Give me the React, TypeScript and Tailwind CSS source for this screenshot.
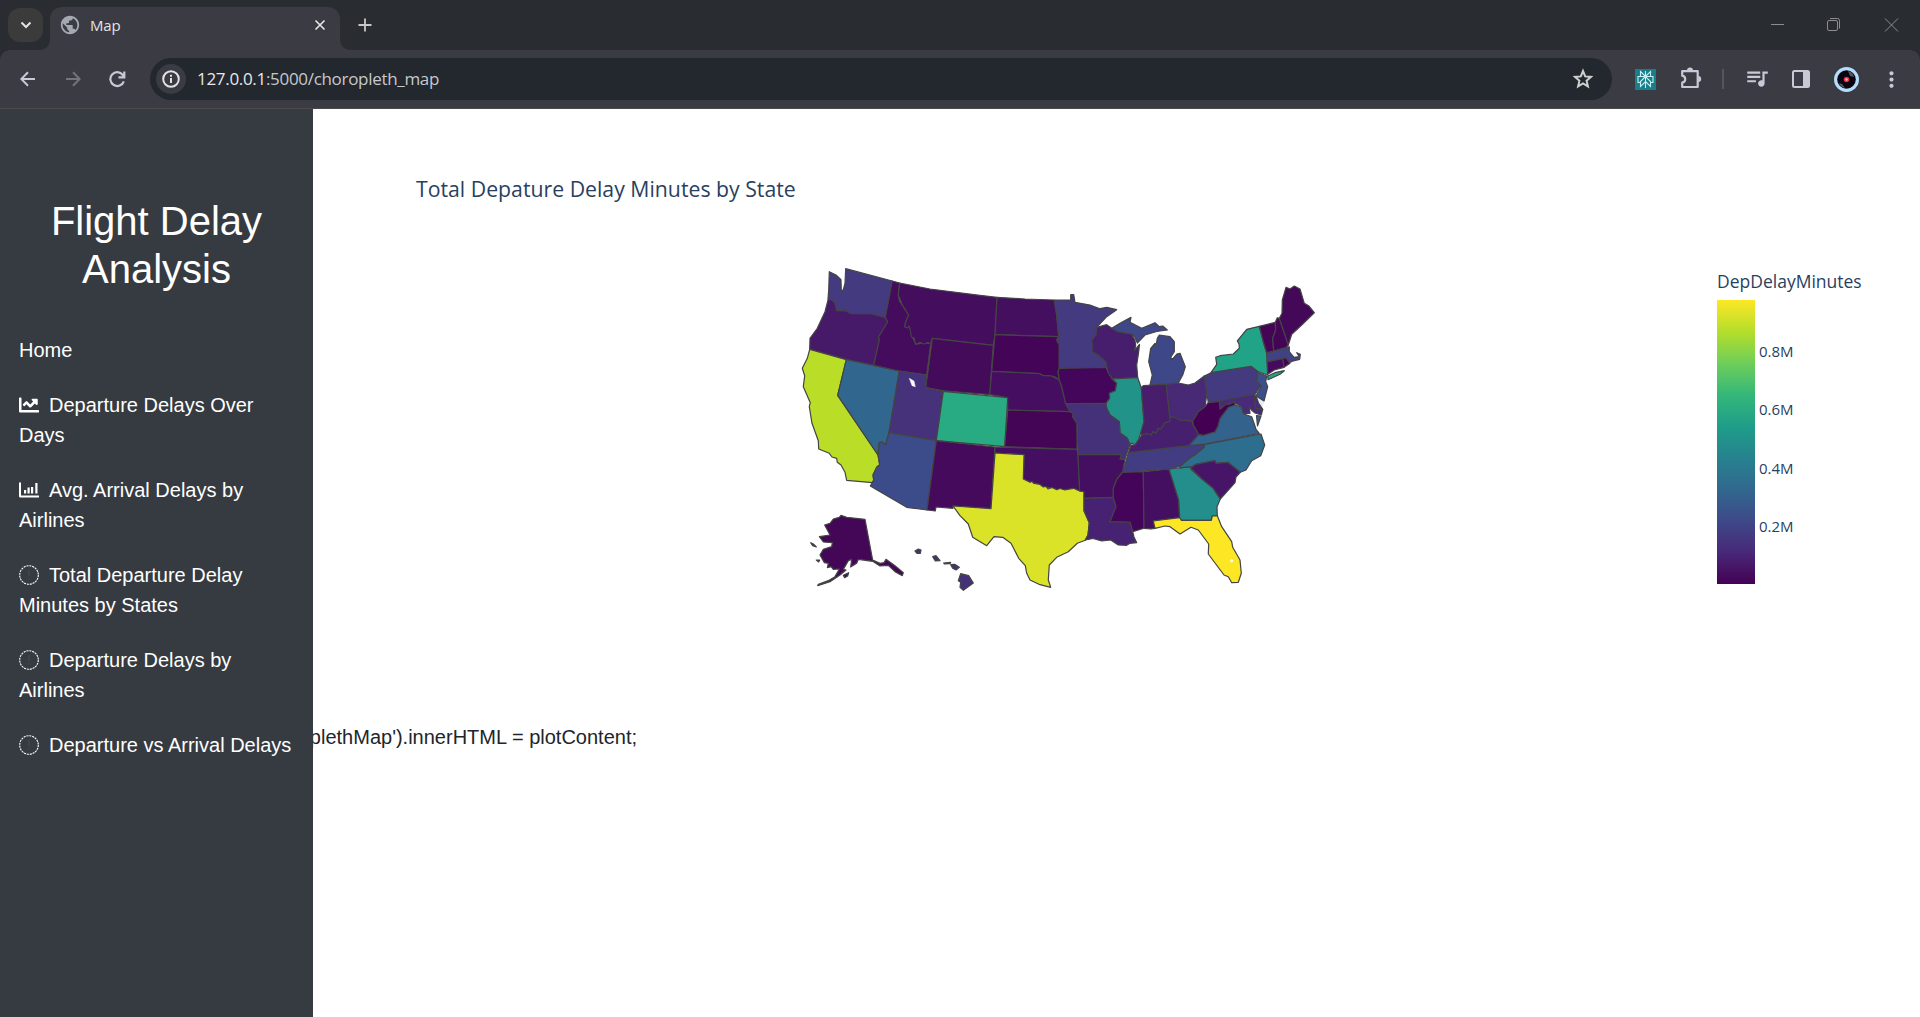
import type { ReactNode } from 'react';
import { MdQueueMusic, MdMoreVert, MdPublic } from 'react-icons/md';
import { FaChartLine } from 'react-icons/fa';

type Shape = [id: string, fill: string, d: string];

const STATES: Shape[] = [
  ['WA', '#433a80', '829.3,271.7 836,275 841,279.7 841.3,291 843.3,289.7 845,283.3 845.7,268.7 892.3,281 885.3,317.3 870,313.3 862,314 850,313.3 846,311 836.7,310.7 835,303.3 832,300 828,299 828.7,290'],
  ['OR', '#461a69', '828.3,299 825,311.7 817.3,328.3 810,338.3 809.7,349.3 846.3,359.7 873.7,365.3 879.3,340 878.7,336.7 887.7,322 885.3,317.3 870,313.3 862,314 850,313.3 846,311 836.7,310.7 835,303.3 832,300'],
  ['CA', '#bade28', '809.7,349.3 807.3,358.3 802.3,368.3 804.7,375.7 803.3,386.7 810.3,402.7 809.3,406.7 812,423.3 818.3,440.7 818.7,449 829.3,453.3 832,457 836.7,458.3 837.3,462.3 841,465 845,472.3 846.7,480.3 872.7,482.7 873.7,480 873,475 876.7,467.3 879.7,464.7 878,455 837.7,395.3 846.3,359.7'],
  ['NV', '#31668e', '846.3,359.7 837.7,395.3 878,455 879.3,442.7 881.7,442 885.7,444.7 889,432.7 899.3,371'],
  ['ID', '#450c5d', '892.3,281 899.7,283 898.3,295 899.5,301 902.7,305.7 908.7,315 906,321 904.7,326.7 909.3,326 912,336 915.7,344.3 923,343 930.7,343.7 926.7,375 899.3,371 873.7,365.3 879.3,340 878.7,336.7 887.7,322 885.3,317.3'],
  ['MT', '#450d5e', '899.7,283 930,289 980,295.3 997,297.3 995,334.7 993.3,345.3 932.3,338.3 930.7,343.7 928,342.5 924,344 920,342.5 915.7,344.3 914,338 911.5,337 909.3,326 907,328 904.7,326.7 906,321 908.7,315 902.7,305.7 898.3,295'],
  ['WY', '#450b5b', '932.3,338.3 993.3,345.3 989.7,394.7 943.3,390.8 925.7,387.7'],
  ['UT', '#45327a', '899.3,371 926.7,375 925.7,387.7 943.3,391.3 936.3,440.7 889,432.7'],
  ['CO', '#28aa82', '943.3,391.3 1007.7,397.7 1004.7,446.7 936.3,440.7'],
  ['AZ', '#3c4c8a', '889,432.7 936.3,440.7 927,510 906.7,507.3 870.3,486 873.7,480 873,475 876.7,467.3 879.7,464.7 878,455 879.3,442.7 881.7,442 885.7,444.7'],
  ['NM', '#450a5b', '936.3,440.7 995,447 991,508.7 953,506 953,508.3 936,507 935.3,511 927,510'],
  ['ND', '#450f60', '997,297.3 1025,299 1054.3,300 1056.7,315 1058.7,336.7 995,334.7'],
  ['SD', '#440559', '995,334.7 1058.7,336.7 1056.7,340 1059.3,345 1059.3,368.3 1058,372 1059.3,380 1055,377 1051.7,376 1043.3,375.7 1040,373.7 991.7,371.3'],
  ['NE', '#450e60', '991.7,371.3 1040,373.7 1043.3,375.7 1051.7,376 1059.3,380 1061.7,386.7 1065.7,403.3 1070,411.7 1007.7,410 1007.7,397.7 989.7,394.7'],
  ['KS', '#440557', '1007.7,410 1070,411.7 1073.3,413.5 1072.7,416.7 1077,423.3 1077,449.3 1004.7,446.7'],
  ['OK', '#450f61', '995,447 1077,449.3 1078,455 1079.7,491 1073.3,488.3 1065,490 1056.7,489.7 1050,488 1043.3,487 1040,484.5 1030,482.3 1023.3,479 1024,454.7 995,453'],
  ['TX', '#dae328', '995,453 1024,454.7 1023.3,479 1030,482.3 1032,481.5 1034,483.5 1040,484.5 1043.3,487 1046,486.5 1048,489 1052,487.5 1056.7,489.7 1060,488.5 1065,490 1073.3,488.3 1079.7,491 1084,491.7 1084,510.7 1089.3,522.7 1088,535 1085.3,540.3 1077.3,543.3 1068.3,551.7 1056.7,557.3 1049.3,565 1048.3,580 1050.7,587.3 1040,584.7 1030,580 1026.7,573.3 1025.3,565.7 1018.7,558.3 1011,543.3 1002.7,537.3 994,536.7 986.7,545.7 972.7,537.3 968.3,524 960,515.7 953,506 991,508.7'],
  ['MN', '#433a80', '1054.3,300 1070.7,300 1070.7,294.7 1073.7,294.7 1075,302.3 1090,305 1100,308.7 1106.7,307.3 1116.7,309.7 1106.7,316.7 1096.7,327.3 1096,335 1092,340 1092.3,351.7 1098,355 1106,362.3 1106.3,367.3 1059.3,368.3 1059.3,345 1056.7,340 1058.7,336.7 1056.7,315'],
  ['IA', '#44065a', '1059.3,368.3 1106.3,367.3 1107.7,371.7 1112.3,379 1116.7,383.3 1115.3,390.7 1109.3,393.3 1109.7,398.3 1106,403.3 1065.7,403.7 1061.7,386.7 1059.3,380 1058,372'],
  ['WI', '#471d6d', '1096.7,327.3 1106.7,324.7 1111.7,328.3 1118.3,331.7 1131.7,334 1135,340 1135.7,345.7 1134.3,350.7 1139.5,344.5 1138.7,351.7 1136.7,365 1137.7,377.7 1112.3,379 1107.7,371.7 1106,362.3 1098,355 1092.3,351.7 1092,340 1096,335'],
  ['MI-U', '#3e4787', '1111.7,328.3 1120,323.3 1131,317.3 1130,322.3 1141.7,328.3 1155,322.7 1159.3,326.7 1162.7,326 1167.3,330 1156.7,331.5 1145,335 1137.3,343 1135,337 1131.7,334 1118.3,331.7'],
  ['MI-L', '#3e4787', '1159.3,335 1170,336.7 1174.3,341.7 1174.3,351.7 1170.7,357.3 1172.3,359.3 1177,354 1180,353.3 1185.3,366.7 1182.7,375 1178.3,383 1150,385 1152.3,375 1148.7,361.7 1150.7,348.3 1155,343.3 1156,346 1157.3,338.3'],
  ['IL', '#219389', '1112.3,379 1137.7,377.7 1141.3,387.7 1144,421.7 1140.7,433.3 1138,441 1135,445 1132,443 1130,444.7 1127.3,438.3 1120,433 1119.3,421.7 1110,415 1106.7,408.3 1106,403.3 1109.7,398.3 1109.3,393.3 1115.3,390.7 1116.7,383.3'],
  ['MO', '#45307a', '1065.7,403.7 1106,403.3 1106.7,408.3 1110,415 1119.3,421.7 1120,433 1127.3,438.3 1130,444.7 1128.3,449.3 1125,459.3 1120,459.3 1121.3,454.3 1078,454.7 1077,423.3 1072.7,416.7 1073.3,413.5 1070,411.7'],
  ['AR', '#450f61', '1078,454.7 1121.3,454.3 1120,459.3 1125,459.3 1122.7,471.7 1117,479 1113.3,488.3 1113.3,497.3 1084,498.3 1084,491.7 1079.7,491'],
  ['LA', '#472272', '1084,498.3 1113.3,497.3 1116,506.7 1110,521.7 1130,522 1132.7,531.7 1134,537 1136.7,542.7 1130,543.3 1126.7,545.3 1118.3,545 1110.7,540 1101.7,541 1093,538.5 1085.3,540 1088,535 1089.3,522.7 1084,510.7'],
  ['MS', '#44045a', '1122.7,472 1143.3,471.7 1144,528.3 1132.7,531.7 1130,522 1110,521.7 1116,506.7 1113.3,497.3 1113.3,488.3 1117,479'],
  ['AL', '#450f61', '1143.3,471.7 1169,469 1178.7,500 1179.7,517.7 1153.3,521 1155,528.3 1151,529 1144,528.3'],
  ['GA', '#238e8b', '1169,469 1191.7,466.7 1190.7,469 1202,479 1213.3,488.3 1220.3,499 1217,506.7 1217.3,515.7 1212.3,516 1211.3,520.3 1181.3,520.3 1179.7,517.7 1178.7,500'],
  ['FL', '#fde725', '1153.3,521 1179.7,517.7 1181.3,520.3 1211.3,520.3 1212.3,516 1217.3,515.7 1221.7,526.7 1231.7,541.7 1232.7,547.3 1240,560 1241.3,573.3 1238.3,582.3 1231.7,582.7 1228.3,576.7 1224,575 1208.3,554 1208.7,544 1198.3,530 1191,527.3 1180,534 1170,526.7 1165,526 1155,528.3'],
  ['TN', '#423d83', '1128.3,452.7 1188.7,445.7 1204.7,444.3 1204.3,447.3 1195,455 1190,458 1180.3,466.3 1169,469 1122.7,472.3'],
  ['NC', '#2d6e8e', '1180.3,466.3 1190,458 1195,455 1204.3,447.3 1204.7,444.3 1261,434 1264.7,445 1260.7,455.7 1251.7,460.7 1246,470 1240.3,472.3 1227.7,462.3 1216,463.3 1215,460.7 1196,464.3 1191.700,466.700 1180,467.800'],
  ['SC', '#461567', '1190.7,468 1196,464.3 1215,460.7 1216,463.3 1227.7,462.3 1240.3,472.3 1236,477 1235,482.7 1220.3,499 1213.3,488.3 1202,479'],
  ['VA', '#33628c', '1188.7,445.7 1198.7,434.3 1203.3,435.3 1215,431.7 1220,418.3 1228.3,407.3 1235,405 1241.7,407.3 1244,414 1251.7,416.7 1254,423.3 1256,429.3 1259.3,433.3 1204.7,444'],
  ['KY', '#471f6f', '1128.3,452.7 1131,445 1135,445 1141.7,435 1147,433.5 1151,435 1153,431.5 1156,433 1158,428.5 1161,429 1164.3,423.3 1170,421 1169.7,416.7 1174,417 1180,420 1191.7,421 1194,426.7 1198.7,434.3 1188.7,445.7'],
  ['IN', '#471d6c', '1141.3,387.7 1143.5,385.5 1166.3,384.3 1169.7,416.7 1170,421 1164.3,423.3 1161,429 1158,428.5 1156,433 1153,431.5 1151,435 1147,433.5 1141.7,435 1140.7,433.3 1144,421.7'],
  ['OH', '#472975', '1166.3,384.3 1178.3,383 1188.3,385 1195,383 1204.3,376 1207,393.3 1205,406.7 1198,412 1196,416 1192.7,421 1180,420 1174,417 1169.7,416.7'],
  ['MD', '#472b78', '1219.3,400 1254,393.5 1256,408.3 1262.7,409.3 1261.3,415 1255,413 1251.5,410 1249.3,406.7 1250,413.3 1243.3,413.3 1241.7,406.7 1235,403.3 1230,403.5 1220,408.5'],
  ['PA', '#433a80', '1204.3,376 1211,372.7 1251,366.3 1258.3,372.3 1256.7,379 1261.3,385 1255,394.5 1208.3,402.7'],
  ['NY', '#20a386', '1211,372.7 1216.7,364.3 1215.7,357.3 1220,355.7 1233.3,354 1239.3,348.3 1239,344 1237.3,341 1246.7,329.3 1259.3,326.3 1263.3,341.7 1266.7,353.3 1267.7,375 1258.3,371.7 1251,366.3'],
  ['NY-LI', '#20a386', '1267.7,376 1275,372.7 1284.3,370.7 1280,374.3 1268,379.7'],
  ['VT', '#440556', '1259.3,326.3 1275.3,322.3 1275.7,330 1272.7,338.3 1273.7,351 1266.7,352.7 1263.3,341.7'],
  ['NH', '#440556', '1275.3,322.3 1277.3,317.7 1279.3,318.3 1287.3,341.7 1288.3,345 1286,347.7 1273.7,351 1272.7,338.3 1275.7,330'],
  ['ME', '#440858', '1279.3,318.3 1282,313.3 1282.3,300 1286,287.3 1290,289 1294.3,286 1300,289 1304.3,303.3 1309,306 1314.3,312.7 1301.7,325 1291.7,334.3 1288.3,345'],
  ['CT', '#450a5b', '1267.3,361.7 1282.7,358.3 1284,367.3 1274.3,370 1267.7,374.3'],
  ['RI', '#440356', '1282.7,358.3 1286,357.7 1290,363.3 1284,367.3'],
  ['MA', '#414183', '1267,353.3 1286,347.7 1289.3,346.7 1289.3,351.7 1294,357.3 1299.3,356.7 1296.7,352.7 1300.3,354.3 1299.7,359.3 1293.3,361 1290,362.3 1286,357.7 1267.3,361.7'],
  ['DE', '#472b78', '1254,395 1256,396 1258.5,403 1262.7,409.3 1256,408.3'],
  ['NJ', '#3b4f8a', '1257.3,372.3 1266.7,376 1265.7,381.7 1267.7,386.7 1264,401 1256,396 1261.3,386 1256.7,381.7'],
  ['WV', '#440154', '1208.3,402.7 1219.3,401.3 1220,409.3 1225,405 1230,404 1234.3,401.7 1235,405 1228.3,407.3 1224,413 1220,418.3 1218,426 1215,431.7 1203.3,435.3 1198.7,434.3 1193.3,425 1192.7,421 1196,416 1198,412 1205,406.7'],
  ['VA-E', '#33628c', '1256.5,415.5 1261,416 1257.5,426'],
];

const OFFSHORE: Shape[] = [
  ['AK', '#440757', '183,286 200,292 255,298 278,420 300,430 312,428 318,418 345,437 370,458 367,467 345,455 325,436 300,438 278,424 235,418 230,430 212,441 215,418 205,422 190,448 198,450 180,465 150,485 113,497 115,493 145,482 165,470 178,447 160,448 153,440 142,443 145,430 133,428 120,405 130,388 155,380 157,368 130,366 118,350 150,345 134,315 150,310 160,297 178,292'],
  ['AK1', '#440757', '92,368 100,372 109,381 98,377'],
  ['AK2', '#440757', '190,466 206,458 203,468 194,473'],
  ['AK3', '#440757', '109,420 119,420 116,426'],
  ['HI1', '#45307a', '405,393 415,387 423,390 421,400 411,400'],
  ['HI2', '#45307a', '458,410 468,407 480,422 466,423'],
  ['HI3', '#45307a', '491,429 512,427 510,431 493,432'],
  ['HI4', '#45307a', '512,434 524,433 538,442 528,450 518,445'],
  ['HI5', '#45307a', '542,461 566,467 580,489 550,511 540,502 542,487 535,482'],
];

function UsMap() {
  return (
    <svg className="block h-[340px] w-[530px] shrink-0" viewBox="795 260 530 340" stroke="#444444" strokeWidth="1.2" strokeLinejoin="round">
      <path d="M1255 396 L1264 402 L1262 409 L1257 404Z" fill="#e5ecf6" stroke="none" />
      {STATES.map(([id, fill, pts]) => <polygon key={id} fill={fill} points={pts} />)}
      <path d="M909.3 378.3 L914 381 L915.3 386.7 L912 385.7Z" fill="#fff" stroke="#e5ecf6" strokeWidth=".5" />
      <circle cx="1231.7" cy="560.7" r="1.5" fill="#fff" stroke="none" />
      <g transform="translate(780 420) scale(.33333)" strokeWidth="3.6">
        {OFFSHORE.map(([id, fill, pts]) => <polygon key={id} fill={fill} points={pts} />)}
      </g>
    </svg>
  );
}

function BarsIcon() {
  return (
    <svg className="mr-[10px] inline-block h-4 w-5 align-[-1px]" viewBox="0 0 20 16" fill="white">
      <path d="M0 .5h2v13h18v2H1.2Q0 15.500 0 14.300z" />
      <path d="M5 8h2.200v3.500H5zM8.500 5.500h2.200v6H8.500zM12 5h2.200v6.500H12zM16.300 1h2.200v10.500h-2.200z" />
    </svg>
  );
}

function DottedIcon() {
  return (
    <svg className="mr-[10px] inline-block h-5 w-5 align-[-3px]" viewBox="0 0 20 20" fill="none">
      <circle cx="10" cy="10" r="9.3" stroke="white" strokeWidth="1.1" strokeDasharray="2.1 .822" />
      <path d="M10 5v6M10 13v1.500" stroke="#464b53" />
    </svg>
  );
}

const NAV: { icon: ReactNode; text: string }[] = [
  { icon: null, text: 'Home' },
  { icon: <FaChartLine className="mr-[10px] inline-block h-5 w-5 align-[-3px]" />, text: 'Departure Delays Over Days' },
  { icon: <BarsIcon />, text: 'Avg. Arrival Delays by Airlines' },
  { icon: <DottedIcon />, text: 'Total Departure Delay Minutes by States' },
  { icon: <DottedIcon />, text: 'Departure Delays by Airlines' },
  { icon: <DottedIcon />, text: 'Departure vs Arrival Delays' },
];

function TabStrip() {
  return (
    <div className="flex h-[50px] bg-[#292c30]">
      <div className="mt-2 ml-2 flex h-[34px] w-[35px] items-center justify-center rounded-[12px] bg-[#3b3b3b]">
        <svg className="h-3 w-3" viewBox="0 0 12 12" fill="none" stroke="#e3e3e3" strokeWidth="2"><path d="M1.500 3.500 6 8l4.500-4.500" /></svg>
      </div>
      <svg className="mt-[38px] -ml-[5px] h-3 w-3" viewBox="0 0 12 12" fill="#3a3b43"><path d="M12 0v12H0Q12 12 12 0" /></svg>
      <div className="mt-[7px] flex h-[43px] w-[290px] items-center rounded-t-[12px] bg-[#3a3b43] pr-[14px] pb-[7px] pl-[9px]">
        <MdPublic className="h-[22px] w-[22px] text-[#a3a8b3]" />
        <span className="ml-[9px] text-[15px] tracking-[-0.2px] text-[#e3e3e3]">Map</span>
        <svg className="ml-auto h-3 w-3" viewBox="0 0 12 12" stroke="#e3e3e3" strokeWidth="1.7"><path d="M1.500 1.500l9 9M10.500 1.500l-9 9" /></svg>
      </div>
      <svg className="mt-[38px] h-3 w-3" viewBox="0 0 12 12" fill="#3a3b43"><path d="M0 0v12h12Q0 12 0 0" /></svg>
      <svg className="mt-[18px] ml-[6px] h-[14px] w-[14px]" viewBox="0 0 14 14" stroke="#c8c8c8" strokeWidth="1.8"><path d="M.5 7h13M7 .5v13" /></svg>
      <svg className="mt-[18px] mr-[21px] ml-auto h-[14px] w-[129px]" viewBox="0 0 129 14" fill="none" stroke="#8b8d90">
        <path d="M1 6.500h13" /><rect x="57.500" y="2.500" width="10" height="10" rx="1.500" /><path d="M60 .5h7.500q2 0 2 2v8" /><path d="M115 .5l13 13M128 .5l-13 13" />
      </svg>
    </div>
  );
}

function Toolbar() {
  return (
    <div className="bg-[#292c30]">
      <div className="flex h-[59px] items-center rounded-t-[10px] border-b border-[#4a4a4d] bg-[#3a3b43] pl-5 text-[#c7cad6]">
        <svg className="h-4 w-4" viewBox="0 0 16 16" fill="none" stroke="currentColor" strokeWidth="2"><path d="M15 8H1.500M8 1.300 1.300 8 8 14.700" /></svg>
        <svg className="ml-[29px] h-4 w-4 text-[#74757b]" viewBox="0 0 16 16" fill="none" stroke="currentColor" strokeWidth="2"><path d="M1 8h13.500M8 1.300 14.700 8 8 14.700" /></svg>
        <svg className="ml-[28px] h-[17px] w-[17px]" viewBox="0 0 17 17" fill="none" stroke="currentColor" strokeWidth="2.200"><path d="M14.800 10.300a6.900 6.900 0 1 1-1-6.300l1.700 1.900M15.300.5v5.800H9.500" /></svg>
        <div className="ml-6 flex h-[42px] w-[1462px] items-center rounded-full bg-[#23272e] pr-[18px] pl-[6px]">
          <div className="flex h-[30px] w-[30px] items-center justify-center rounded-full bg-[#3a3b43]">
            <svg className="h-[18px] w-[18px]" viewBox="0 0 18 18" fill="none" stroke="#e3e3e3" strokeWidth="2"><circle cx="9" cy="9" r="7.800" /><path d="M9 8v5M9 4.700v2" /></svg>
          </div>
          <span className="ml-[11px] text-[17px] tracking-[-0.31px] text-[#c7c9cc]"><span className="text-[#e8e8e8]">127.0.0.1</span>:5000/choropleth_map</span>
          <svg className="ml-auto h-[22px] w-[22px]" viewBox="0 0 22 22" fill="none" stroke="#cfcfcf" strokeWidth="2"><path d="M11 3l2.200 5.400 5.800.5-4.400 3.800 1.300 5.700-4.900-3-4.900 3 1.300-5.700L3 8.900l5.800-.5z" /></svg>
        </div>
        <svg className="ml-[23px] h-[21px] w-[21px]" viewBox="0 0 21 21" fill="none" stroke="#c8eef0" strokeWidth="1.100">
          <path d="M0 0h21v21H0z" fill="#177f8b" stroke="none" />
          <path d="M10.500 2v17M5.500 2.500l5 5 5-5v5h-10zM5.500 7.500H3v6h2.500M15.500 7.500H18v6h-2.500M10.500 7.500l-5 5v5l5-5 5 5v-5z" />
        </svg>
        <svg className="mb-[2px] ml-[24px] h-[22px] w-[22px]" viewBox="0 0 22 22" fill="none" stroke="currentColor" strokeWidth="2.200" strokeLinejoin="round">
          <path d="M2.200 4.100h15.500V20H2.200v-4.300q3-.6 3-3.500t-3-3.500z" /><path d="M7 3.500a3 3 0 0 1 6 0zM18.200 9a3 3 0 0 1 0 6z" fill="currentColor" stroke="none" />
        </svg>
        <div className="ml-[20px] h-5 w-[2px] bg-[#54565e]" />
        <MdQueueMusic className="mb-[2px] ml-[20px] h-[26px] w-[26px]" />
        <svg className="ml-[22px] h-[18px] w-[18px]" viewBox="0 0 18 18"><rect x="1" y="1" width="16" height="16" rx="1.500" fill="none" stroke="currentColor" strokeWidth="2" /><path d="M11 1h6v16h-6z" fill="currentColor" /></svg>
        <svg className="ml-[24px] h-[25px] w-[25px]" viewBox="0 0 25 25"><circle cx="12.500" cy="12.500" r="12.500" fill="#b5dcfa" /><circle cx="12.500" cy="12.500" r="9.300" fill="#080513" /><path d="M14 4q5 1 6 6l-4-1zM11 21q-5-1-6-5l3 1z" fill="#555763" /><circle cx="12.500" cy="12.500" r="2.800" fill="#e32664" /><circle cx="12.500" cy="12.500" r="1.200" fill="#f7c653" /></svg>
        <MdMoreVert className="ml-[20px] h-[25px] w-[25px]" />
      </div>
    </div>
  );
}

export default function App() {
  return (
    <div className="flex h-[1017px] w-[1920px] flex-col overflow-hidden bg-white font-['Open_Sans',sans-serif]">
      <TabStrip />
      <Toolbar />
      <div className="flex min-h-0 flex-1">
        <aside className="z-10 w-[313px] shrink-0 bg-[#363a41] px-[19px] pt-[88px] font-['Liberation_Sans',Arial,sans-serif] text-white">
          <h1 className="mb-[42px] text-center text-[40px] leading-[48px]">Flight Delay Analysis</h1>
          <nav className="-mr-[10px] flex flex-col gap-[25px] pr-[25px] text-[20px] leading-[30px]">
            {NAV.map(({ icon, text }) => (
              <a key={text} className={text.includes(' vs ') ? 'whitespace-nowrap' : ''}>{icon}{text}</a>
            ))}
          </nav>
        </aside>
        <main className="flex flex-1 flex-col">
          <h2 className="mt-[65px] ml-[103px] h-[30px] text-[21.25px] leading-[30px] whitespace-nowrap text-[#2a3f5f]">Total Depature Delay Minutes by State</h2>
          <div className="mt-[56px] flex h-[340px]">
            <div className="w-[482px]" />
            <UsMap />
            <div className="ml-[392px] text-[#2a3f5f]">
              <div className="mt-[11px] h-[20px] text-[17.5px] leading-[20px] whitespace-nowrap">DepDelayMinutes</div>
              <div className="mt-[9px] flex">
                <div className="h-[284px] w-[38px] bg-[linear-gradient(to_top,#440154_0%,#482878_11.1%,#3e4989_22.2%,#31688e_33.3%,#26828e_44.4%,#1f9e89_55.6%,#35b779_66.7%,#6ece58_77.8%,#b5de2b_88.9%,#fde725_100%)]" />
                <div className="ml-1 flex flex-col gap-[38.4px] pt-[41px] text-[15px] leading-[20px]">
                  <span>0.8M</span><span>0.6M</span><span>0.4M</span><span>0.2M</span>
                </div>
              </div>
            </div>
          </div>
          <div className="mt-[122px] flex h-[30px] w-[324px] justify-end font-['Liberation_Sans',Arial,sans-serif] text-[20px] leading-[30px] whitespace-nowrap text-[#212529]">plethMap').innerHTML = plotContent;</div>
        </main>
      </div>
    </div>
  );
}
